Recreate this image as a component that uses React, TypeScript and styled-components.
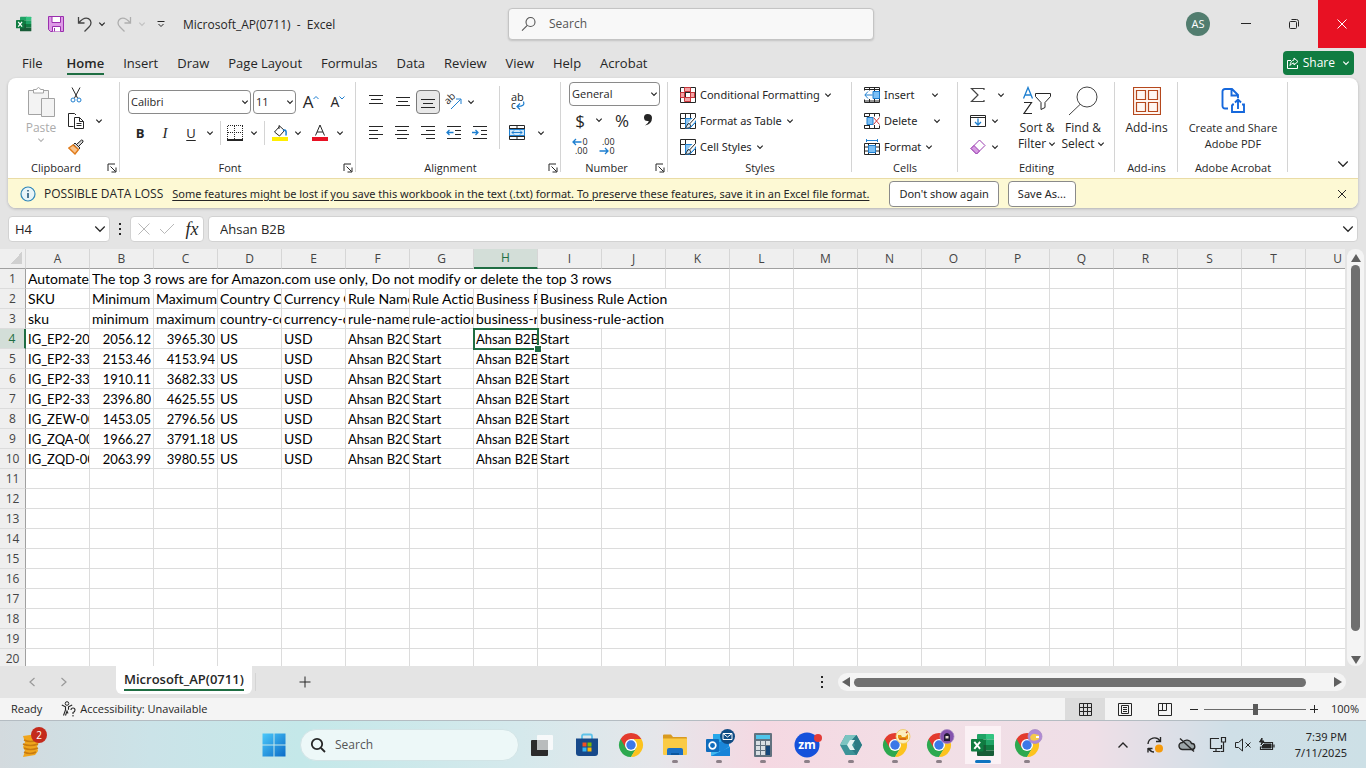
import React from 'react';
import styled, { createGlobalStyle, css } from 'styled-components';

const GREEN = '#1f6e43';
const INK = '#262626';
const BLUE = '#1e7fd0';

const Global = createGlobalStyle`
  *, *::before, *::after { box-sizing: border-box; }
  body { margin: 0; font-family: "Open Sans", "Noto Sans", sans-serif; font-size: 12px; line-height: 16px; color: ${INK}; }
  button, input, select { font: inherit; color: inherit; margin: 0; }
  svg { display: block; flex: none; }
`;

const Screen = styled.div`
  display: flex;
  flex-direction: column;
  height: 100vh;
  min-height: 480px;
  overflow: hidden;
  background: #e4e4e4;
`;

/* ---------- shared pieces ---------- */

const PlainButton = styled.button<{ $w?: number; $h?: number; $on?: boolean }>`
  display: flex;
  align-items: center;
  justify-content: center;
  flex: none;
  width: ${p => (p.$w ? `${p.$w}px` : 'auto')};
  height: ${p => (p.$h ? `${p.$h}px` : 'auto')};
  padding: 0;
  border: ${p => (p.$on ? '1px solid #7a7a7a' : '0')};
  border-radius: 4px;
  background: ${p => (p.$on ? '#e8e8e8' : 'transparent')};
`;

const Rule = styled.span<{ $w: number; $h: number }>`
  flex: none;
  width: ${p => p.$w}px;
  height: ${p => p.$h}px;
  background: linear-gradient(#d4d4d4, #d4d4d4) center / 1px 100% no-repeat;
`;

const Chevron = ({ size = 8, color = INK }: { size?: number; color?: string }) => (
  <svg width={size} height={size} viewBox="0 0 8 8" fill="none" stroke={color} strokeWidth={size > 8 ? 0.7 : 1.2}>
    <path d="M1.3 2.6L4 5.3l2.7-2.7" />
  </svg>
);

type ArtProps = { w?: number; h?: number; box?: string; color?: string; sw?: number; children: React.ReactNode };
const Art = ({ w = 16, h = 16, box, color = INK, sw = 1, children }: ArtProps) => (
  <svg width={w} height={h} viewBox={box || `0 0 ${w} ${h}`} fill="none" stroke={color} strokeWidth={sw} aria-hidden="true">
    {children}
  </svg>
);

/* ---------- title bar ---------- */

const TitleBar = styled.header`
  display: grid;
  grid-template-columns: minmax(0, 508fr) minmax(0, 366fr) minmax(0, 492fr);
  align-items: center;
  flex: none;
  height: 48px;
`;
const QuickAccess = styled.div`
  display: flex;
  align-items: center;
  padding-left: 12px;
  white-space: nowrap;
`;
const DocTitle = styled.span`
  margin-left: 7px;
  padding-top: 1px;
  white-space: pre;
`;
const SearchBox = styled.label`
  display: flex;
  align-items: center;
  gap: 12px;
  height: 32px;
  padding: 0 12px;
  border: 1px solid #c4c4c4;
  border-radius: 4px;
  background: #f8f8f8;
  box-shadow: 0 1px 2px rgba(0, 0, 0, 0.15);
`;
const BareInput = styled.input`
  flex: 1;
  min-width: 0;
  padding: 0;
  border: 0;
  outline: 0;
  background: transparent;
  &::placeholder { color: #555; opacity: 1; }
`;
const WindowControls = styled.div`
  display: flex;
  align-items: center;
  justify-content: flex-end;
  height: 48px;
`;
const Avatar = styled.button`
  width: 24px;
  height: 24px;
  margin-right: 12px;
  padding: 0;
  border: 0;
  border-radius: 50%;
  background: #527d6f;
  color: #fff;
  font-size: 11px;
`;
const CloseButton = styled(PlainButton)`
  border-radius: 0;
  background: #e81123;
`;

/* ---------- ribbon tabs ---------- */

const TabBar = styled.nav`
  display: flex;
  align-items: flex-start;
  flex: none;
  height: 30px;
  padding: 3px 12px 0 22px;
`;
const TabButton = styled.button<{ $active?: boolean }>`
  height: 24px;
  margin-right: 19px;
  padding: 2px 0 0;
  border: 0;
  border-bottom: 2px solid ${p => (p.$active ? GREEN : 'transparent')};
  background: transparent;
  font-size: 13px;
  font-weight: ${p => (p.$active ? 600 : 400)};
  white-space: nowrap;
  &:first-child { margin-right: 24px; }
`;
const ShareButton = styled.button`
  display: flex;
  align-items: center;
  gap: 4px;
  height: 24px;
  margin-left: auto;
  padding: 0 4px;
  border: 0;
  border-radius: 4px;
  background: #107c41;
  color: #fff;
`;

/* ---------- ribbon ---------- */

const Panel = styled.section`
  flex: none;
  margin: 0 8px;
  overflow: hidden;
  border-radius: 8px;
  background: #fff;
  box-shadow: 0 1px 3px rgba(0, 0, 0, 0.22);
`;
const Ribbon = styled.div`
  display: flex;
  height: 100px;
`;
const Group = styled.div<{ $w: number }>`
  display: flex;
  flex-direction: column;
  flex: none;
  width: ${p => p.$w}px;
  background: linear-gradient(#d4d4d4, #d4d4d4) right 4px / 1px 90px no-repeat;
`;
const GroupBody = styled.div<{ $x?: number; $y?: number; $center?: boolean }>`
  display: flex;
  flex: 1;
  min-height: 0;
  justify-content: ${p => (p.$center ? 'center' : 'flex-start')};
  padding: ${p => p.$y || 4}px 0 0 ${p => p.$x || 0}px;
`;
const GroupFoot = styled.div`
  display: flex;
  align-items: flex-start;
  height: 18px;
  font-size: 11px;
  text-align: center;
`;
const GroupLabel = styled.span`
  flex: 1;
  white-space: nowrap;
`;
const Stack = styled.div<{ $ml?: number }>`
  display: flex;
  flex-direction: column;
  margin-left: ${p => p.$ml || 0}px;
`;
const Line = styled.div<{ $h: number; $gap?: number }>`
  display: flex;
  align-items: center;
  gap: ${p => p.$gap || 0}px;
  height: ${p => p.$h}px;
`;
const Command = styled.button`
  display: flex;
  align-items: center;
  height: 26px;
  gap: 4px;
  padding: 0;
  border: 0;
  background: transparent;
  font-family: "Noto Sans", "Open Sans", sans-serif;
  font-size: 11px;
  white-space: nowrap;
`;
const ChevronSlot = styled.span<{ $ml?: number }>`
  margin-left: ${p => p.$ml || 0}px;
`;
const BigButton = styled.button<{ $w: number; $dim?: boolean; $small?: boolean }>`
  display: flex;
  flex-direction: column;
  align-items: center;
  width: ${p => p.$w}px;
  padding: 3px 0 0;
  border: 0;
  background: transparent;
  color: ${p => (p.$dim ? '#ababab' : INK)};
  font-size: ${p => (p.$small ? 11 : 12)}px;
  white-space: nowrap;
`;
const BigIcon = styled.span`
  display: flex;
  align-items: center;
  justify-content: center;
  height: 32px;
  margin-bottom: 3px;
`;
const BigText = styled.span`
  display: flex;
  align-items: center;
  gap: 2px;
`;
const PickerWrap = styled.label<{ $w: number }>`
  position: relative;
  display: block;
  width: ${p => p.$w}px;
  height: 24px;
  svg { position: absolute; right: 2px; top: 8px; pointer-events: none; }
`;
const Picker = styled.select`
  width: 100%;
  height: 24px;
  padding: 0 2px;
  border: 1px solid #8a8a8a;
  border-radius: 4px;
  background: #fff;
  appearance: none;
  font-size: 11px;
`;
const Glyph = styled.span<{ $size: number; $bold?: boolean; $italic?: boolean; $under?: boolean }>`
  font-size: ${p => p.$size}px;
  line-height: ${p => p.$size}px;
  font-weight: ${p => (p.$bold ? 700 : 400)};
  ${p => p.$italic && css`font-family: "Liberation Serif", serif; font-style: italic;`}
  ${p => p.$under && css`text-decoration: underline; text-underline-offset: 2px;`}
`;
const Collapse = styled.div`
  display: flex;
  flex: 1;
  align-items: flex-end;
  justify-content: flex-end;
  padding: 0 8px 8px 0;
`;

const Picked = ({ w, label, value }: { w: number; label: string; value: string }) => (
  <PickerWrap $w={w}>
    <Picker aria-label={label} defaultValue={value}><option>{value}</option></Picker>
    <Chevron />
  </PickerWrap>
);

const Drop = ({ w = 12, label, color }: { w?: number; label: string; color?: string }) => (
  <PlainButton $w={w} $h={24} aria-label={label}><Chevron color={color} /></PlainButton>
);

type RibbonGroupProps = { w: number; label: string; launcher?: boolean; x?: number; y?: number; center?: boolean; children: React.ReactNode };
const RibbonGroup = ({ w, label, launcher, x, y, center, children }: RibbonGroupProps) => (
  <Group $w={w}>
    <GroupBody $x={x} $y={y} $center={center}>{children}</GroupBody>
    <GroupFoot>
      <GroupLabel>{label}</GroupLabel>
      {launcher && (
        <PlainButton $w={16} $h={16} aria-label={`${label} settings`}>
          <Art w={10} h={10}><path d="M1 8V1h7M3.500 3.500l5 5M9 4.500V9H4.500" /></Art>
        </PlainButton>
      )}
    </GroupFoot>
  </Group>
);

const AlignArt = ({ rows }: { rows: [number, number, number][] }) => (
  <Art>{rows.map(([x, y, w]) => <path key={y} d={`M${x} ${y}.5h${w}`} />)}</Art>
);

const GridArt = ({ fill, edge = BLUE, kind }: { fill: string; edge?: string; kind: string }) => (
  <Art>
    {kind === 'cond' && (<>
      <path d="M.5.5h15v15H.5zM5.500.5v15M10.500.5v15M.5 5.500h15M.5 10.500h15" />
      <path d="M4.500.5h6v4h-6zM.5 5.500h4v5h-4zM4.500 10.500h6v4h-6zM10.500 5.500h4v5h-4z" fill={fill} stroke={edge} />
    </>)}
    {(kind === 'table' || kind === 'cell') && (<>
      <path d="M.5.5h15v15H.5zM5.500.5v15M.5 5.500h15" />
      {kind === 'table' && <path d="M10.500.5v15M.5 10.500h15" />}
      <path d="M5.500 5.500h10v4l-6 6h-4z" fill={fill} stroke={edge} />
      <path d="M15.500 4.500l-6 7" stroke="#fff" strokeWidth="4" />
      <path d="M15.500 4.500l-6 6.500M9 10.500c-2 0-2 3-3.500 4.500 2.500.5 5.500-.5 5-3z" fill="#d9ecfa" />
    </>)}
    {kind === 'insert' && (<>
      <path d="M.5 3.500v-3h15v15H.5v-3M5.500.5v3M10.500.5v15M5.500 12v3.500M.5 14h15M.5 2.500h15" />
      <path d="M9 4.500h6.500v7H9z" fill={fill} stroke={edge} />
      <path d="M8.500 8H1M4 4.500L.8 8 4 11.500" stroke={edge} />
    </>)}
    {kind === 'delete' && (<>
      <path d="M.5 3.500v-3h15v3M.5 12.500v3h15v-3M5.500.5v3M10.500.5v3M5.500 12v3.500M10.500 12v3.500M0 3.500h5M0 12.500h5" />
      <path d="M3 4.500h6v7H3z" fill={fill} stroke={edge} />
      <path d="M9.500 4.500l6 7M15.500 4.500l-6 7" stroke="#d13438" />
    </>)}
    {kind === 'format' && (<>
      <path d="M.5 4.500h15v11H.5zM4.500 4.500v11M11.500 4.500v11M.5 8h15M.5 12h15" />
      <path d="M4.500 6.500h7v7h-7z" fill={fill} stroke={edge} />
      <path d="M2.500 0v3M13.500 0v3M2.500 1.500h11" stroke={edge} />
    </>)}
  </Art>
);

const alignTop: [number, number, number][] = [[1, 1, 14], [3, 5, 10], [1, 9, 14]];
const alignMid: [number, number, number][] = [[1, 3, 14], [3, 7, 10], [1, 11, 14]];
const alignLow: [number, number, number][] = [[1, 5, 14], [3, 9, 10], [1, 13, 14]];
const textLeft: [number, number, number][] = [[1, 1, 14], [1, 5, 9], [1, 9, 14], [1, 13, 9]];
const textMid: [number, number, number][] = [[1, 1, 14], [3, 5, 10], [1, 9, 14], [3, 13, 10]];
const textRight: [number, number, number][] = [[1, 1, 14], [6, 5, 9], [1, 9, 14], [6, 13, 9]];

const IndentArt = ({ out }: { out?: boolean }) => (
  <Art>
    <path d="M1 1.500h14M9 5.500h6M9 9.500h6M1 13.500h14" />
    <path d={out ? 'M7.500 7.500H1M3.500 5L1 7.500 3.500 10' : 'M0 7.500h6M3.500 5L6 7.500 3.500 10'} stroke={BLUE} strokeWidth="1.300" />
  </Art>
);

const DecimalText = styled.span`
  display: grid;
  justify-items: end;
  font-size: 9px;
  line-height: 9px;
`;
const DecimalRow = styled.span`
  display: flex;
  align-items: center;
`;
const ArrowArt = ({ left }: { left?: boolean }) => (
  <Art w={10} h={8} color={BLUE} sw={1.3}><path d={left ? 'M9.500 4H1M4 1L1 4l3 3' : 'M.5 4H9M6 1l3 3-3 3'} /></Art>
);

/* ---------- message bar ---------- */

const MessageBar = styled.div`
  display: flex;
  align-items: center;
  height: 30px;
  padding: 0 8px 0 12px;
  border-top: 1px solid #eadca6;
  background: #fdf9d4;
  white-space: nowrap;
  font-family: "Noto Sans", "Open Sans", sans-serif;
  font-size: 11px;
`;
const MessageTitle = styled.span`
  margin: 0 9px 0 8px;
  font-family: "Open Sans", sans-serif;
  font-size: 12px;
`;
const MessageLink = styled.a`
  margin-right: 20px;
  color: inherit;
  text-decoration: underline;
  text-underline-offset: 2px;
`;
const MessageButton = styled.button`
  height: 26px;
  margin-right: 9px;
  padding: 0 9px;
  border: 1px solid #8a8a8a;
  border-radius: 4px;
  background: #fff;
`;
const Push = styled.span`
  margin-left: auto;
`;

/* ---------- formula bar ---------- */

const FormulaBar = styled.div`
  display: flex;
  align-items: center;
  flex: none;
  height: 26px;
  margin: 8px 8px 7px 8px;
`;
const WhiteBox = styled.div<{ $w?: number; $ml?: number }>`
  display: flex;
  align-items: center;
  ${p => (p.$w ? css`flex: none; width: ${p.$w}px;` : css`flex: 1; min-width: 0;`)}
  height: 26px;
  margin-left: ${p => p.$ml || 0}px;
  padding: 0 2px 0 6px;
  border: 1px solid #d2d2d2;
  border-radius: 4px;
  background: #fff;
  font-size: 13px;
`;
const FormulaInput = styled(BareInput)`
  padding-left: 5px;
`;
const FxMark = styled.span`
  font-family: "Liberation Serif", serif;
  font-size: 18px;
  font-style: italic;
`;

/* ---------- grid ---------- */

const SheetArea = styled.main`
  display: flex;
  flex: 1;
  min-height: 0;
`;
const SheetViewport = styled.div`
  flex: 1;
  min-width: 0;
  overflow: hidden;
  background: #fff;
`;
const SheetTable = styled.table`
  width: 1370px;
  table-layout: fixed;
  border-collapse: separate;
  border-spacing: 0;
`;
const ColHead = styled.th<{ $sel?: boolean }>`
  height: 20px;
  padding: 0;
  border-right: 1px solid #d6d6d6;
  border-bottom: ${p => (p.$sel ? `2px solid ${GREEN}` : '1px solid #a0a0a0')};
  background: ${p => (p.$sel ? '#d3ded8' : '#efefef')};
  color: ${p => (p.$sel ? GREEN : '#444')};
  font-weight: 400;
  line-height: 18px;
`;
const Corner = styled(ColHead)`
  background: linear-gradient(to top left, #d0d0d0 50%, #efefef 50%) 10px 3px / 12px 12px no-repeat, #efefef;
`;
const RowHead = styled.th<{ $sel?: boolean }>`
  height: 20px;
  padding: 0;
  border-right: ${p => (p.$sel ? `2px solid ${GREEN}` : '1px solid #a0a0a0')};
  border-bottom: 1px solid #dcdcdc;
  background: ${p => (p.$sel ? '#d3ded8' : '#efefef')};
  color: ${p => (p.$sel ? GREEN : '#444')};
  font-weight: 400;
  line-height: 19px;
`;
const Cell = styled.td<{ $num?: boolean }>`
  position: relative;
  height: 20px;
  padding: 0 ${p => (p.$num ? 3 : 1)}px 0 2px;
  border-right: 1px solid #dcdcdc;
  border-bottom: 1px solid #dcdcdc;
  color: #000;
  font-family: Lato, sans-serif;
  font-size: 14px;
  font-variant-ligatures: none;
  line-height: 19px;
  text-align: ${p => (p.$num ? 'right' : 'left')};
`;
const CellText = styled.div`
  height: 19px;
  margin-right: -1px;
  overflow: hidden;
  white-space: nowrap;
`;
const CodeText = styled.span`
  font-size: 13px;
`;
const SelectionFrame = styled.div`
  position: absolute;
  z-index: 1;
  inset: -1px -2px -2px -1px;
  border: 2px solid ${GREEN};
  &::after {
    content: "";
    position: absolute;
    right: -4px;
    bottom: -4px;
    width: 6px;
    height: 6px;
    outline: 1px solid #fff;
    background: ${GREEN};
  }
`;
const VScroll = styled.div`
  display: flex;
  flex-direction: column;
  align-items: center;
  justify-content: space-between;
  flex: none;
  width: 17px;
  margin: 0 2px;
  padding: 5px 0 2px;
  border-radius: 8px;
  background: #f4f4f4;
`;
const VThumb = styled.div`
  flex: 1;
  width: 9px;
  margin: 3px 0 25px;
  border-radius: 5px;
  background: #707070;
`;

/* ---------- sheet tabs and status ---------- */

const SheetTabs = styled.div`
  display: flex;
  align-items: center;
  flex: none;
  height: 32px;
  padding: 0 20px 0 22px;
`;
const SheetTab = styled.button`
  align-self: flex-start;
  height: 28px;
  margin-left: 42px;
  padding: 0 8px;
  border: 0;
  border-radius: 0 0 6px 6px;
  background: #fff;
  font-size: 13px;
  font-weight: 600;
`;
const SheetTabText = styled.span`
  display: block;
  height: 22px;
  border-bottom: 2px solid ${GREEN};
  line-height: 20px;
`;
const HScroll = styled.div`
  display: flex;
  align-items: center;
  flex: 0 1 508px;
  height: 18px;
  margin-left: 8px;
  padding: 0 4px;
  border-radius: 9px;
  background: #f4f4f4;
`;
const HThumb = styled.div`
  flex: 1;
  height: 9px;
  margin: 0 28px 0 4px;
  border-radius: 5px;
  background: #707070;
`;
const StatusBar = styled.footer`
  display: flex;
  align-items: center;
  flex: none;
  height: 22px;
  padding: 0 7px 0 11px;
  background: #f4f4f4;
  font-size: 11px;
`;
const StatusText = styled.span<{ $ml?: number }>`
  margin-left: ${p => p.$ml || 0}px;
`;
const ViewButton = styled(PlainButton)`
  border-radius: 0;
  background: ${p => (p.$on ? '#dcdcdc' : 'transparent')};
  border: 0;
`;
const Zoom = styled.input`
  width: 102px;
  height: 16px;
  margin: 0 4px 0 1px;
  background: linear-gradient(#6b6b6b, #6b6b6b) center / 100% 1px no-repeat;
  appearance: none;
  &::-webkit-slider-thumb { appearance: none; width: 5px; height: 11px; background: #5a5a5a; }
`;

/* ---------- taskbar ---------- */

const Taskbar = styled.footer`
  display: flex;
  align-items: center;
  flex: none;
  height: 48px;
  border-top: 1px solid #b4bcc2;
  background: linear-gradient(90deg, #d3dade 0%, #cbe3e8 11%, #c4e8e9 22%, #d5e9ec 38%, #e5e6ea 48%, #f5d8e2 56%, #f2dfe6 68%, #efdfe7 80%, #cfdfe7 90%, #cde0e6 100%);
`;
const WidgetSlot = styled.div`
  display: flex;
  flex: none;
  width: 252px;
  padding-left: 20px;
`;
const WidgetButton = styled.button`
  position: relative;
  padding: 0;
  border: 0;
  background: transparent;
`;
const CountBadge = styled.span`
  position: absolute;
  top: -5px;
  left: 11px;
  width: 16px;
  height: 16px;
  border-radius: 50%;
  background: #c42b1c;
  color: #fff;
  font-size: 10px;
`;
const TaskSearch = styled.label`
  display: flex;
  align-items: center;
  gap: 9px;
  flex: 0 1 219px;
  height: 32px;
  margin: 0 2px 0 4px;
  padding: 0 9px;
  border: 1px solid #d2e4e6;
  border-radius: 16px;
  background: #edf8f8;
`;
const AppButton = styled.button<{ $active?: boolean; $running?: boolean }>`
  display: flex;
  align-items: center;
  justify-content: center;
  position: relative;
  flex: none;
  width: 44px;
  height: 40px;
  padding: 0;
  border: 0;
  background: linear-gradient(${p => (p.$active ? '#fbf1f5, #fbf1f5' : 'transparent, transparent')}) center / 36px 38px no-repeat;
  &::after {
    content: "";
    display: ${p => (p.$running || p.$active ? 'block' : 'none')};
    position: absolute;
    bottom: 2px;
    left: calc(50% - ${p => (p.$active ? 8 : 3)}px);
    width: ${p => (p.$active ? 16 : 6)}px;
    height: 3px;
    border-radius: 2px;
    background: ${p => (p.$active ? '#0f74c0' : '#8c8088')};
  }
`;
const Tray = styled.div`
  display: flex;
  align-items: center;
  margin-left: auto;
  padding-right: 19px;
`;
const Clock = styled.button`
  margin-left: 14px;
  padding: 0;
  border: 0;
  background: transparent;
  font-family: "Noto Sans", "Open Sans", sans-serif;
  font-size: 11px;
  text-align: right;
`;

const ExcelArt = ({ size }: { size: number }) => (
  <svg width={size} height={size} viewBox="0 0 24 24" aria-hidden="true">
    <path d="M7 1h9v5.500H6V2a1 1 0 011-1z" fill="#21a366" />
    <path d="M15 1h7a1 1 0 011 1v4.500h-8z" fill="#33c481" />
    <path d="M6 6.500h9V12H6z" fill="#107c41" /><path d="M15 6.500h8V12h-8z" fill="#21a366" />
    <path d="M6 12h9v11H7a1 1 0 01-1-1z" fill="#185c37" />
    <path d="M15 12h8v5.500h-8z" fill="#107c41" /><path d="M15 17.500h8V22a1 1 0 01-1 1h-7z" fill="#185c37" />
    <rect y="6" width="12.500" height="12.500" rx="1" fill="#107c41" />
    <path d="M3.300 8.800l5.800 7M9.100 8.800l-5.800 7" stroke="#fff" strokeWidth="1.900" />
  </svg>
);

const ChromeArt = ({ badge }: { badge?: 'gold' | 'purple' | 'lilac' }) => (
  <svg width="32" height="32" viewBox="0 0 32 32" aria-hidden="true">
    <path d="M5.600 10a12 12 0 0010.400 18l6-9.500L10.800 13z" fill="#2da94f" />
    <path d="M26.400 10A12 12 0 0116 28l5.200-9L19 10z" fill="#fcc31e" />
    <path d="M5.600 10A12 12 0 0126.400 10H16L10.800 19z" fill="#e33b2e" />
    <circle cx="16" cy="16" r="6" fill="#fff" /><circle cx="16" cy="16" r="4.700" fill="#3b78e7" />
    {badge && <circle cx="24" cy="7.500" r="7" fill={badge === 'gold' ? '#fbeebd' : badge === 'purple' ? '#8553ae' : '#b08ad6'} stroke={badge === 'gold' ? '#edc75c' : '#a98cc4'} strokeWidth=".8" />}
    {badge === 'gold' && <><path d="M19 6h3l1 2h3l3-3v5l-2 1h-6l-2-2z" fill="#e8960f" /><path d="M20 10h7M27 4l1.500-1.500" stroke="#c8401f" strokeWidth="1.200" /></>}
    {badge === 'purple' && <><path d="M21 12V6q3-4 6 0v6z" fill="#241a38" /><path d="M22.500 7h3v2.500h-3z" fill="#e9dcd4" /></>}
    {badge === 'lilac' && <><path d="M19 8q2-4 5-3l4 1v4q-4 3-8 1z" fill="#f4c94d" /><path d="M25 7h3v2h-3z" fill="#fff" /></>}
  </svg>
);

const apps: { name: string; running?: boolean; active?: boolean; art: React.ReactNode }[] = [
  { name: 'Task View', art: (
    <svg width="26" height="26" viewBox="0 0 26 26"><rect x="7" y="3" width="16" height="15" rx="1" fill="#f7f9fa" /><rect x="1" y="8" width="17" height="16" rx="1" fill="#2b2b2b" /><path d="M7 8h11v10H7z" fill="#b9bcbd" /></svg>) },
  { name: 'Microsoft Store', art: (
    <svg width="26" height="26" viewBox="0 0 26 26"><path d="M8 7V4a1.500 1.500 0 011.500-1.500h7A1.500 1.500 0 0118 4v3" fill="none" stroke="#5fc3ea" strokeWidth="1.800" /><path d="M2 6.500h22V21a3 3 0 01-3 3H5a3 3 0 01-3-3z" fill="#17498a" /><path d="M8.500 10.500h4v4h-4z" fill="#f25022" /><path d="M13.500 10.500h4v4h-4z" fill="#7fba00" /><path d="M8.500 15.500h4v4h-4z" fill="#35b5f1" /><path d="M13.500 15.500h4v4h-4z" fill="#ffb900" /></svg>) },
  { name: 'Google Chrome', art: <ChromeArt /> },
  { name: 'File Explorer', running: true, art: (
    <svg width="26" height="26" viewBox="0 0 26 26"><path d="M1 3.500a1 1 0 011-1h7l2 2.500h13a1 1 0 011 1V8H1z" fill="#d99a20" /><path d="M1 6.500h24V22a1 1 0 01-1 1H2a1 1 0 01-1-1z" fill="#fbcb45" /><path d="M5 23v-5a2 2 0 012-2h12a2 2 0 012 2v5z" fill="#1b70c4" /><path d="M9 21h8v2H9z" fill="#0b569f" /></svg>) },
  { name: 'Outlook', running: true, art: (
    <svg width="32" height="32" viewBox="0 0 32 32"><path d="M10 5h16v21H10z" fill="#1a86d9" /><path d="M10 5h8v8h-8z" fill="#28a8ea" /><path d="M8 17l10 6 9-6v10H8z" fill="#43b8f0" /><path d="M8 27l19-9v9z" fill="#1683d8" /><rect x="3" y="10" width="13" height="13" rx="1" fill="#0f6cbd" /><circle cx="9.500" cy="16.500" r="3.300" fill="none" stroke="#fff" strokeWidth="1.700" /><circle cx="24.500" cy="7.500" r="7.500" fill="#104c84" /><path d="M20 4.500h9v6h-9zl4.500 3.500L29 4.500" fill="none" stroke="#fff" /></svg>) },
  { name: 'Calculator', running: true, art: (
    <svg width="26" height="26" viewBox="0 0 26 26"><rect x="4" y="1" width="18" height="24" rx="1" fill="#62727f" /><path d="M6 3h14v4H6z" fill="#51c5ea" /><path d="M6 9h4v4H6zM11 9h4v4h-4zM16 9h4v4h-4zM6 14h4v4H6zM11 14h4v4h-4zM6 19h4v4H6zM11 19h4v4h-4z" fill="#d9dfe3" /><path d="M16 14h4v9h-4z" fill="#15477a" /></svg>) },
  { name: 'Zoom', running: true, art: (
    <svg width="30" height="28" viewBox="0 0 30 28"><circle cx="15" cy="14" r="12.500" fill="#1551db" /><text x="15" y="17.500" textAnchor="middle" fontFamily="Open Sans, sans-serif" fontWeight="700" fontSize="12" fill="#fff">zm</text><circle cx="26" cy="7" r="4" fill="#e23b38" /></svg>) },
  { name: 'Hexagon', running: true, art: (
    <svg width="26" height="26" viewBox="0 0 26 26"><path d="M7.500 3h11L24 13l-5.500 10h-11L2 13z" fill="#3c9398" /><path d="M7.500 3h11L14 8l-4 5H2z" fill="#7cc4c1" /><path d="M18.500 3L24 13l-5.500 10-4.500-5 3-5-3-5z" fill="#2b7b84" /><path d="M12 8h5l-3 5 3 5h-5l-3-5z" fill="#e6f3f2" /></svg>) },
  { name: 'Chrome profile 1', running: true, art: <ChromeArt badge="gold" /> },
  { name: 'Chrome profile 2', running: true, art: <ChromeArt badge="purple" /> },
  { name: 'Excel', active: true, art: <ExcelArt size={24} /> },
  { name: 'Chrome profile 3', running: true, art: <ChromeArt badge="lilac" /> },
];

/* ---------- data ---------- */

const columns = 'ABCDEFGHIJKLMNOPQRSTU'.split('');
type CellData = { text: string; span?: number };
const line = (...texts: string[]): CellData[] => texts.map(text => ({ text }));
const rule = (sku: string, low: string, high: string) => line(sku, low, high, 'US', 'USD', 'Ahsan B2C', 'Start', 'Ahsan B2B', 'Start');

const sheet: CellData[][] = [
  [{ text: 'Automate Pricing' }, { text: 'The top 3 rows are for Amazon.com use only, Do not modify or delete the top 3 rows', span: 9 }],
  [...line('SKU', 'Minimum', 'Maximum', 'Country Code', 'Currency Code', 'Rule Name', 'Rule Action', 'Business Rule'), { text: 'Business Rule Action', span: 3 }],
  [...line('sku', 'minimum', 'maximum', 'country-code', 'currency-code', 'rule-name', 'rule-action', 'business-rule'), { text: 'business-rule-action', span: 3 }],
  rule('IG_EP2-2001', '2056.12', '3965.30'),
  rule('IG_EP2-3301', '2153.46', '4153.94'),
  rule('IG_EP2-3302', '1910.11', '3682.33'),
  rule('IG_EP2-3303', '2396.80', '4625.55'),
  rule('IG_ZEW-001', '1453.05', '2796.56'),
  rule('IG_ZQA-001', '1966.27', '3791.18'),
  rule('IG_ZQD-001', '2063.99', '3980.55'),
];
const rowNumbers = Array.from({ length: 20 }, (_, i) => i + 1);

const SheetRow = ({ n }: { n: number }) => {
  const cells = sheet[n - 1] || [];
  const used = cells.reduce((sum, c) => sum + (c.span || 1), 0);
  const blanks = columns.slice(used);
  return (
    <tr>
      <RowHead scope="row" $sel={n === 4}>{n}</RowHead>
      {cells.map((c, i) => (
        <Cell key={i} colSpan={c.span} $num={/^\d+\.\d+$/.test(c.text)}>
          <CellText>{/\d/.test(c.text) && !c.span ? <CodeText>{c.text}</CodeText> : c.text}</CellText>
          {n === 4 && i === 7 && <SelectionFrame />}
        </Cell>
      ))}
      {blanks.map(col => <Cell key={col} />)}
    </tr>
  );
};

const tabs = ['File', 'Home', 'Insert', 'Draw', 'Page Layout', 'Formulas', 'Data', 'Review', 'View', 'Help', 'Acrobat'];

export default function App() {
  return (
    <Screen>
      <Global />
      <TitleBar>
        <QuickAccess>
          <PlainButton $w={24} $h={24} aria-label="Excel"><ExcelArt size={16} /></PlainButton>
          <PlainButton $w={40} $h={24} aria-label="Save">
            <Art color="#9a2fae"><path d="M.5.5h15v15h-13l-2-2z" fill="#dd9ae6" /><path d="M4 .5h8.500v6H4zM4.500 15.500v-5h8v5" fill="#fff" /><path d="M6.500 12v3.500" /></Art>
          </PlainButton>
          <PlainButton $w={18} $h={24} aria-label="Undo">
            <Art sw={1.3} color="#444"><path d="M1.500 1v6h6M1.800 6.700C5 3 8 1 11.500 2.600c3.500 2 3 6 .5 8.400l-4.500 4.500" /></Art>
          </PlainButton>
          <Drop w={16} label="Undo history" />
          <PlainButton $w={28} $h={24} aria-label="Redo">
            <Art sw={1.3} color="#aeaeae"><path d="M14.500 1v6h-6M14.200 6.700C11 3 8 1 4.500 2.600 1 4.600 1.500 8.600 4 11l4.500 4.500" /></Art>
          </PlainButton>
          <Drop w={8} label="Redo history" color="#c2c2c2" />
          <PlainButton $w={30} $h={24} aria-label="Customize toolbar">
            <Art w={8} h={8}><path d="M.5 1.500h7M1.500 4L4 6.500 6.500 4" /></Art>
          </PlainButton>
          <DocTitle>{'Microsoft_AP(0711)  -  Excel'}</DocTitle>
        </QuickAccess>
        <SearchBox>
          <Art color="#555" sw={1.1}><circle cx="9.500" cy="6" r="4.500" /><path d="M6.300 9.300L1 14.700" /></Art>
          <BareInput placeholder="Search" aria-label="Search commands" />
        </SearchBox>
        <WindowControls>
          <Avatar>AS</Avatar>
          <PlainButton $w={48} $h={48} aria-label="Minimize"><Art w={10} h={10}><path d="M0 4.500h10" /></Art></PlainButton>
          <PlainButton $w={48} $h={48} aria-label="Restore"><Art w={10} h={10}><rect x=".5" y="2.500" width="7" height="7" rx="1" /><path d="M2.500.5h5a2 2 0 012 2v5" /></Art></PlainButton>
          <CloseButton $w={48} $h={48} aria-label="Close"><Art w={10} h={10} color="#fff"><path d="M.5.5l9 9M9.500.5l-9 9" /></Art></CloseButton>
        </WindowControls>
      </TitleBar>

      <TabBar>
        {tabs.map(t => <TabButton key={t} $active={t === 'Home'}>{t}</TabButton>)}
        <ShareButton>
          <Art w={12} h={12} color="#fff"><path d="M4 3.500H.5v8h10V8M7 1l4 3.500L7 8V6Q4.500 6 3 8.500 3.500 3.500 7 3z" /></Art>
          Share
          <ChevronSlot $ml={3}><Chevron color="#fff" /></ChevronSlot>
        </ShareButton>
      </TabBar>

      <Panel>
        <Ribbon>
          <RibbonGroup w={112} label="Clipboard" launcher x={12}>
            <BigButton $w={42} $dim>
              <BigIcon>
                <Art w={28} h={31} color="#a3a3a3"><path d="M1.500 4.500h20v24h-20z" fill="#f3f3f3" /><path d="M6.500 7V3.500h3q2-4 4 0h3V7z" fill="#fff" /><path d="M14.500 12.500h13v18h-13z" fill="#f3f3f3" /></Art>
              </BigIcon>
              Paste
              <Chevron color="#b5b5b5" />
            </BigButton>
            <Stack>
              <Line $h={26}><PlainButton $w={28} $h={24} aria-label="Cut">
                <Art><path d="M4 .5l5.500 10.500M12 .5L6.500 11" /><circle cx="5" cy="13" r="2" stroke={BLUE} /><circle cx="11" cy="13" r="2" stroke={BLUE} /></Art></PlainButton></Line>
              <Line $h={26}><PlainButton $w={28} $h={24} aria-label="Copy">
                <Art><path d="M5.500 13.500h-5V.5h6l1.500 1.500M6.500 4.500h5l4 4v7h-9zM11.500 4.500v4h4M8.500 10.500h5M8.500 12.500h5" /></Art></PlainButton><Drop w={18} label="Copy options" /></Line>
              <Line $h={26}><PlainButton $w={28} $h={24} aria-label="Format painter">
                <Art><path d="M9 5l4.500-4q2 0 1.500 2L11 7M7 4l5 5-1.500 1.500-5-5z" fill="#d5d5d5" /><path d="M5 6L.8 9l6.200 6 3.500-4.500z" fill="#f8c38c" stroke="#e07b1a" strokeWidth="1.400" /></Art></PlainButton></Line>
            </Stack>
          </RibbonGroup>

          <RibbonGroup w={236} label="Font" launcher x={8} y={8}>
            <Stack>
              <Line $h={31} $gap={2}>
                <Picked w={123} label="Font name" value="Calibri" />
                <Picked w={43} label="Font size" value="11" />
                <PlainButton $w={26} $h={24} aria-label="Increase font size"><Glyph $size={17}>A</Glyph><Art w={6} h={14} color={BLUE}><path d="M.5 4L3 1.500 5.500 4" /></Art></PlainButton>
                <PlainButton $w={24} $h={24} aria-label="Decrease font size"><Glyph $size={14}>A</Glyph><Art w={6} h={14} color={BLUE}><path d="M.5 1.500L3 4l2.500-2.500" /></Art></PlainButton>
              </Line>
              <Line $h={32}>
                <PlainButton $w={24} $h={24}><Glyph $size={13} $bold>B</Glyph></PlainButton>
                <PlainButton $w={26} $h={24}><Glyph $size={15} $italic>I</Glyph></PlainButton>
                <PlainButton $w={26} $h={24}><Glyph $size={13} $under>U</Glyph></PlainButton>
                <Drop label="Underline styles" />
                <Rule $w={8} $h={24} />
                <PlainButton $w={22} $h={24} aria-label="Borders">
                  <Art><path d="M.5.5h15M.5.5v14M15.500.5v14M7.500.5v14M.5 7.500h15" strokeDasharray="1 1" shapeRendering="crispEdges" /><path d="M0 15h16" strokeWidth="2" /></Art></PlainButton>
                <Drop w={16} label="Border styles" />
                <Rule $w={4} $h={24} />
                <PlainButton $w={28} $h={24} aria-label="Fill colour">
                  <Art><path d="M7.500 1.500L2.500 7l5 4 5-5.500L7 .500V4" /><path d="M11 5.500q4-2 3 5" stroke={BLUE} strokeWidth="1.600" /><path d="M0 12h16v4H0z" fill="#ffee00" stroke="none" /></Art></PlainButton>
                <Drop w={8} label="Fill colours" />
                <PlainButton $w={36} $h={24} aria-label="Font colour">
                  <Art><path d="M3.500 10.500L8 0l4.500 10.500M5 7h6" /><path d="M0 12h16v4H0z" fill="#e81123" stroke="none" /></Art></PlainButton>
                <Drop w={4} label="Font colours" />
              </Line>
            </Stack>
          </RibbonGroup>

          <RibbonGroup w={205} label="Alignment" launcher x={7} y={8}>
            <Stack>
              <Line $h={31}>
                <PlainButton $w={26} $h={24} aria-label="Top align"><AlignArt rows={alignTop} /></PlainButton>
                <PlainButton $w={27} $h={24} aria-label="Middle align"><AlignArt rows={alignMid} /></PlainButton>
                <PlainButton $w={24} $h={24} $on aria-label="Bottom align"><AlignArt rows={alignLow} /></PlainButton>
                <PlainButton $w={28} $h={24} aria-label="Orientation">
                  <Art w={18} h={18}><text x="0" y="9" transform="rotate(-45 5 7)" fontSize="10" fontFamily="Open Sans, sans-serif" fill={INK} stroke="none">ab</text><path d="M6 16L15.500 6.500M11 6h5v5" stroke={BLUE} /></Art></PlainButton>
                <Drop w={6} label="Orientation options" />
              </Line>
              <Line $h={32}>
                <PlainButton $w={26} $h={24} aria-label="Align left"><AlignArt rows={textLeft} /></PlainButton>
                <PlainButton $w={26} $h={24} aria-label="Center"><AlignArt rows={textMid} /></PlainButton>
                <PlainButton $w={26} $h={24} aria-label="Align right"><AlignArt rows={textRight} /></PlainButton>
                <PlainButton $w={26} $h={24} aria-label="Decrease indent"><IndentArt out /></PlainButton>
                <PlainButton $w={26} $h={24} aria-label="Increase indent"><IndentArt /></PlainButton>
              </Line>
            </Stack>
            <Rule $w={12} $h={63} />
            <Stack>
              <Line $h={31}><PlainButton $w={26} $h={24} aria-label="Wrap text">
                <Art w={16} h={18}><text x="1" y="8" fontSize="11" fontFamily="Open Sans, sans-serif" fill={INK} stroke="none">ab</text><text x="1" y="16" fontSize="10" fontFamily="Open Sans, sans-serif" fill={INK} stroke="none">c</text><path d="M13.500 8.500q2 5-6 5M10 10.500l-3 3 3 3" stroke={BLUE} strokeWidth="1.200" /></Art></PlainButton></Line>
              <Line $h={32}><PlainButton $w={24} $h={24} aria-label="Merge">
                <Art><path d="M.5.5h15v14H.5zM.5 3.500h15M.5 11.500h15M8 .5v3M8 11.500v3" /><path d="M.5 4.500h15v6H.5z" fill="#cfe6f8" stroke={BLUE} /><path d="M3 7.500h10M5 5.500l-2 2 2 2M11 5.500l2 2-2 2" stroke={BLUE} /></Art></PlainButton><Drop w={24} label="Merge options" /></Line>
            </Stack>
          </RibbonGroup>

          <RibbonGroup w={107} label="Number" launcher x={8}>
            <Stack>
              <Line $h={24}><Picked w={91} label="Number format" value="General" /></Line>
              <Line $h={28}>
                <PlainButton $w={22} $h={24}><Glyph $size={17}>$</Glyph></PlainButton>
                <Drop w={16} label="Currency options" />
                <PlainButton $w={30} $h={24}><Glyph $size={17}>%</Glyph></PlainButton>
                <PlainButton $w={22} $h={24} aria-label="Comma style"><Art w={10} h={14} color="none"><path d="M4.500 1a3.500 3.500 0 100 7h1.300Q5.500 10.500 2 12.500 9 11 9 5 9 1 4.500 1z" fill={INK} /></Art></PlainButton>
              </Line>
              <Line $h={24} $gap={5}>
                <PlainButton $w={22} $h={24} aria-label="Increase decimal"><DecimalText><DecimalRow><ArrowArt left />0</DecimalRow><span>.00</span></DecimalText></PlainButton>
                <PlainButton $w={22} $h={24} aria-label="Decrease decimal"><DecimalText><span>.00</span><DecimalRow><ArrowArt />0</DecimalRow></DecimalText></PlainButton>
              </Line>
            </Stack>
          </RibbonGroup>

          <RibbonGroup w={184} label="Styles" x={12}>
            <Stack>
              <Command><GridArt kind="cond" fill="#f4a3a5" edge="#c8363b" />Conditional Formatting<Chevron /></Command>
              <Command><GridArt kind="table" fill="#8fc6f0" />Format as Table<Chevron /></Command>
              <Command><GridArt kind="cell" fill="#8fc6f0" />Cell Styles<Chevron /></Command>
            </Stack>
          </RibbonGroup>

          <RibbonGroup w={106} label="Cells" x={12}>
            <Stack>
              <Command><GridArt kind="insert" fill="#7cc0f5" />Insert<ChevronSlot $ml={12}><Chevron /></ChevronSlot></Command>
              <Command><GridArt kind="delete" fill="#7cc0f5" />Delete<ChevronSlot $ml={12}><Chevron /></ChevronSlot></Command>
              <Command><GridArt kind="format" fill="#7cc0f5" />Format<Chevron /></Command>
            </Stack>
          </RibbonGroup>

          <RibbonGroup w={157} label="Editing" x={12}>
            <Stack>
              <Line $h={26}><PlainButton $w={16} $h={24} aria-label="AutoSum"><Art color="#444" sw={1.2}><path d="M14 3V1.500H1.500L8 8l-6.500 6.500H14V13" /></Art></PlainButton><Drop w={30} label="Functions" /></Line>
              <Line $h={26}><PlainButton $w={16} $h={24} aria-label="Fill"><Art><path d="M.5 2.500h15v11H.5zM.5 4.500h15" /><path d="M8 5.500V12M5 9l3 3 3-3" stroke={BLUE} strokeWidth="1.300" /></Art></PlainButton><Drop w={18} label="Fill options" /></Line>
              <Line $h={26}><PlainButton $w={16} $h={24} aria-label="Clear"><Art color="#9a3fb0"><path d="M1 9.500L9.500 1l5.500 5.500L6.500 15z" fill="#fff" /><path d="M1 9.500L4 6.500l5.500 5.500-3 3z" fill="#d79be2" /></Art></PlainButton><Drop w={18} label="Clear options" /></Line>
            </Stack>
            <BigButton $w={42}>
              <BigIcon><Art w={30} h={30}><path d="M1.500 12.500L6 1.500l4.500 11M3 9h6" stroke={BLUE} strokeWidth="1.300" /><path d="M2 16.500h7.500l-7.500 11h8" strokeWidth="1.200" /><path d="M13.500 7.500h15v3l-5.500 6v5l-4 2v-7l-5.500-6z" /></Art></BigIcon>
              <BigText>Sort &amp;</BigText>
              <BigText>Filter<Chevron /></BigText>
            </BigButton>
            <BigButton $w={50}>
              <BigIcon><Art w={30} h={30} color="#444"><circle cx="19" cy="11" r="10" /><path d="M12 18.500L1 29" /></Art></BigIcon>
              <BigText>Find &amp;</BigText>
              <BigText>Select<Chevron /></BigText>
            </BigButton>
          </RibbonGroup>

          <RibbonGroup w={63} label="Add-ins" center>
            <BigButton $w={56}>
              <BigIcon><Art w={28} h={28} color="#b5481d" sw={1.2}><path d="M.5.5h27v27H.5zM3.500 3.500h9v9h-9zM15.500 3.500h9v9h-9zM3.500 15.500h9v9h-9zM15.500 15.500h9v9h-9z" fill="#fff7f2" /></Art></BigIcon>
              Add-ins
            </BigButton>
          </RibbonGroup>

          <RibbonGroup w={110} label="Adobe Acrobat" center>
            <BigButton $w={100} $small>
              <BigIcon><Art w={24} h={26} color="#1668dc" sw={1.9}><path d="M7 20.500H4a2.500 2.500 0 01-2.500-2.500V3.500A2.500 2.500 0 014 1h7l6 6v3M10.500 1v6.500h6M11 16.500v7.500h12v-7.500h-2M13 16.500h-2M17 21V12M14 14.500l3-3 3 3" /></Art></BigIcon>
              <BigText>Create and Share</BigText>
              <BigText>Adobe PDF</BigText>
            </BigButton>
          </RibbonGroup>
          <Collapse><PlainButton $w={14} $h={12} aria-label="Collapse ribbon"><Chevron size={14} /></PlainButton></Collapse>
        </Ribbon>

        <MessageBar role="status">
          <Art color="#2f86b8" sw={1.2}><circle cx="8" cy="8" r="7" fill="#e8f4f8" /><path d="M8 7v5M8 4v1.500" stroke="#1b4f72" strokeWidth="1.500" /></Art>
          <MessageTitle>POSSIBLE DATA LOSS</MessageTitle>
          <MessageLink href="#formats">Some features might be lost if you save this workbook in the text (.txt) format. To preserve these features, save it in an Excel file format.</MessageLink>
          <MessageButton>Don't show again</MessageButton>
          <MessageButton>Save As...</MessageButton>
          <Push><PlainButton $w={16} $h={16} aria-label="Dismiss"><Art w={10} h={10}><path d="M1 1l8 8M9 1L1 9" /></Art></PlainButton></Push>
        </MessageBar>
      </Panel>

      <FormulaBar>
        <WhiteBox $w={102}><BareInput aria-label="Name box" defaultValue="H4" /><Chevron size={14} /></WhiteBox>
        <PlainButton $w={20} $h={24} aria-label="Resize"><Art w={4} h={12} color="none"><path d="M1 0h2v2H1zM1 5h2v2H1zM1 10h2v2H1z" fill={INK} /></Art></PlainButton>
        <WhiteBox $w={74}>
          <PlainButton $w={14} $h={20} aria-label="Cancel"><Art w={12} h={12} color="#b8b8b8"><path d="M.5.5l11 11M11.500.5l-11 11" /></Art></PlainButton>
          <PlainButton $w={32} $h={20} aria-label="Enter"><Art w={16} h={12} color="#b8b8b8"><path d="M1 6l4.500 4.500L15 1" /></Art></PlainButton>
          <PlainButton $w={18} $h={20} aria-label="Insert function"><FxMark>fx</FxMark></PlainButton>
        </WhiteBox>
        <WhiteBox $ml={4}><FormulaInput aria-label="Formula" defaultValue="Ahsan B2B" /><Chevron size={14} /></WhiteBox>
      </FormulaBar>

      <SheetArea>
        <SheetViewport>
          <SheetTable>
            <colgroup><col width="26" />{columns.map(c => <col key={c} width="64" />)}</colgroup>
            <thead>
              <tr><Corner aria-label="Select all" />{columns.map(c => <ColHead key={c} scope="col" $sel={c === 'H'}>{c}</ColHead>)}</tr>
            </thead>
            <tbody>{rowNumbers.map(n => <SheetRow key={n} n={n} />)}</tbody>
          </SheetTable>
        </SheetViewport>
        <VScroll>
          <Art w={10} h={8} color="none"><path d="M5 0l5 8H0z" fill="#606060" /></Art>
          <VThumb />
          <Art w={10} h={8} color="none"><path d="M5 8l5-8H0z" fill="#606060" /></Art>
        </VScroll>
      </SheetArea>

      <SheetTabs>
        <PlainButton $w={20} $h={20} aria-label="Previous sheet"><Art w={8} h={10} color="#999" sw={1.2}><path d="M6.500 1L2 5l4.500 4" /></Art></PlainButton>
        <Rule $w={12} $h={0} />
        <PlainButton $w={20} $h={20} aria-label="Next sheet"><Art w={8} h={10} color="#999" sw={1.2}><path d="M1.500 1L6 5 1.500 9" /></Art></PlainButton>
        <SheetTab><SheetTabText>Microsoft_AP(0711)</SheetTabText></SheetTab>
        <Rule $w={8} $h={18} />
        <PlainButton $w={90} $h={20} aria-label="New sheet"><Art w={12} h={12}><path d="M6 .5v11M.5 6h11" /></Art></PlainButton>
        <Push><PlainButton $w={16} $h={20} aria-label="Resize tabs"><Art w={4} h={12} color="none"><path d="M1 0h2v2H1zM1 5h2v2H1zM1 10h2v2H1z" fill={INK} /></Art></PlainButton></Push>
        <HScroll>
          <Art w={8} h={10} color="none"><path d="M8 0v10L0 5z" fill="#606060" /></Art>
          <HThumb />
          <Art w={8} h={10} color="none"><path d="M0 0v10l8-5z" fill="#606060" /></Art>
        </HScroll>
      </SheetTabs>

      <StatusBar>
        <StatusText>Ready</StatusText>
        <StatusText $ml={19}><Art><circle cx="6" cy="2.500" r="1.800" /><path d="M.8 4l3.700 1.800V9l-2 5.500M11.200 4L7.500 5.800v3M4.500 14.500L6 10l1 2.500M10 9q0-2 2-2t2 2-2 2.500V13M12 14v1.500" strokeWidth="1.100" /></Art></StatusText>
        <StatusText $ml={3}>Accessibility: Unavailable</StatusText>
        <Push />
        <ViewButton $w={40} $h={22} $on aria-label="Normal view"><Art w={13} h={13}><path d="M.5.5h12v12H.5zM4.500.5v12M8.500.5v12M.5 4.500h12M.5 8.500h12" /></Art></ViewButton>
        <ViewButton $w={40} $h={22} aria-label="Page layout view"><Art w={14} h={13}><path d="M.5.5h13v12H.5zM3.500 2.500h7v8h-7zM5 4.500h4M5 6.500h4M5 8.500h4" /></Art></ViewButton>
        <ViewButton $w={40} $h={22} aria-label="Page break view"><Art w={14} h={13}><path d="M.5.5h13v12H.5zM.5 7.500h8v-7M4.500.5v7" /></Art></ViewButton>
        <PlainButton $w={18} $h={16} aria-label="Zoom out"><Art w={8} h={8}><path d="M0 4.500h8" /></Art></PlainButton>
        <Zoom type="range" aria-label="Zoom" min={10} max={190} defaultValue={100} />
        <PlainButton $w={8} $h={16} aria-label="Zoom in"><Art w={8} h={8}><path d="M0 4.500h8M4.500 0v8" /></Art></PlainButton>
        <StatusText $ml={13}>100%</StatusText>
      </StatusBar>

      <Taskbar>
        <WidgetSlot>
          <WidgetButton aria-label="Widgets">
            <Art w={26} h={26} color="#d48a12"><path d="M3 4l14-2-1 5 3 3-2 5 1 4-3 4-12 2 2-6-2-4 2-5z" fill="#f0a51c" stroke="none" /><path d="M4 8q6 3 14 0M3 12q7 3 15 0M4 16q6 3 14 0M4 20q6 3 12 0" strokeWidth="1.500" stroke="#c87b10" /></Art>
            <CountBadge>2</CountBadge>
          </WidgetButton>
        </WidgetSlot>
        <AppButton aria-label="Start">
          <svg width="24" height="24" viewBox="0 0 24 24">
            <defs><linearGradient id="start" x1="0" y1="0" x2="1" y2="1"><stop offset="0" stopColor="#4cc9fa" /><stop offset="1" stopColor="#0b6cc8" /></linearGradient></defs>
            <path d="M.5.5h11v11H.5zM12.500.5h11v11h-11zM.5 12.500h11v11H.5zM12.500 12.500h11v11h-11z" fill="url(#start)" />
          </svg>
        </AppButton>
        <TaskSearch>
          <Art sw={1.8}><circle cx="7" cy="7" r="5.200" /><path d="M11 11l4 4" /></Art>
          <BareInput placeholder="Search" aria-label="Search Windows" />
        </TaskSearch>
        {apps.map(a => <AppButton key={a.name} aria-label={a.name} $running={a.running} $active={a.active}>{a.art}</AppButton>)}
        <Tray>
          <PlainButton $w={32} $h={32} aria-label="Hidden icons"><Art w={12} h={8} sw={1.4}><path d="M1.500 6.500L6 2l4.500 4.500" /></Art></PlainButton>
          <PlainButton $w={32} $h={32} aria-label="Updates">
            <Art w={18} h={18} sw={1.4}><path d="M2 8a6.500 6.500 0 0112-3M14.500 1v4.500H10M2 12v4.500M2 12.500h4.500M3 13q2 3 5 3" /><circle cx="13" cy="12.500" r="4" fill="#f59a0c" stroke="none" /></Art></PlainButton>
          <PlainButton $w={32} $h={32} aria-label="OneDrive">
            <Art w={18} h={16} sw={1.4}><path d="M4.500 12.500a3.500 3.500 0 010-7 5 5 0 019 1 3 3 0 01.5 6z" fill="#9da6a9" /><path d="M2 1.500l14 13" /></Art></PlainButton>
          <PlainButton $w={30} $h={32} aria-label="Network">
            <Art w={18} h={18} sw={1.2}><path d="M10 2.500H1.500v10h11V9M7 12.500v3M4 15.500h7M12.500 1.500h4V6h-4zM14.500 6v9.500h-3" /></Art></PlainButton>
          <PlainButton $w={20} $h={32} aria-label="Volume">
            <Art><path d="M.5 5.500h3l4-3.500v12l-4-3.500h-3zM10.500 5.500l5 5M15.500 5.500l-5 5" /></Art></PlainButton>
          <PlainButton $w={28} $h={32} aria-label="Battery">
            <Art><path d="M3 5.500h10.500v7H1.500v-3M15 7.500v3" strokeWidth="1.200" /><path d="M5 7h7v4H3V9z" fill={INK} /><path d="M3 1L.5 5H3L2 8l3-4H3z" fill={INK} /></Art></PlainButton>
          <Clock>7:39 PM<br />7/11/2025</Clock>
        </Tray>
      </Taskbar>
    </Screen>
  );
}
